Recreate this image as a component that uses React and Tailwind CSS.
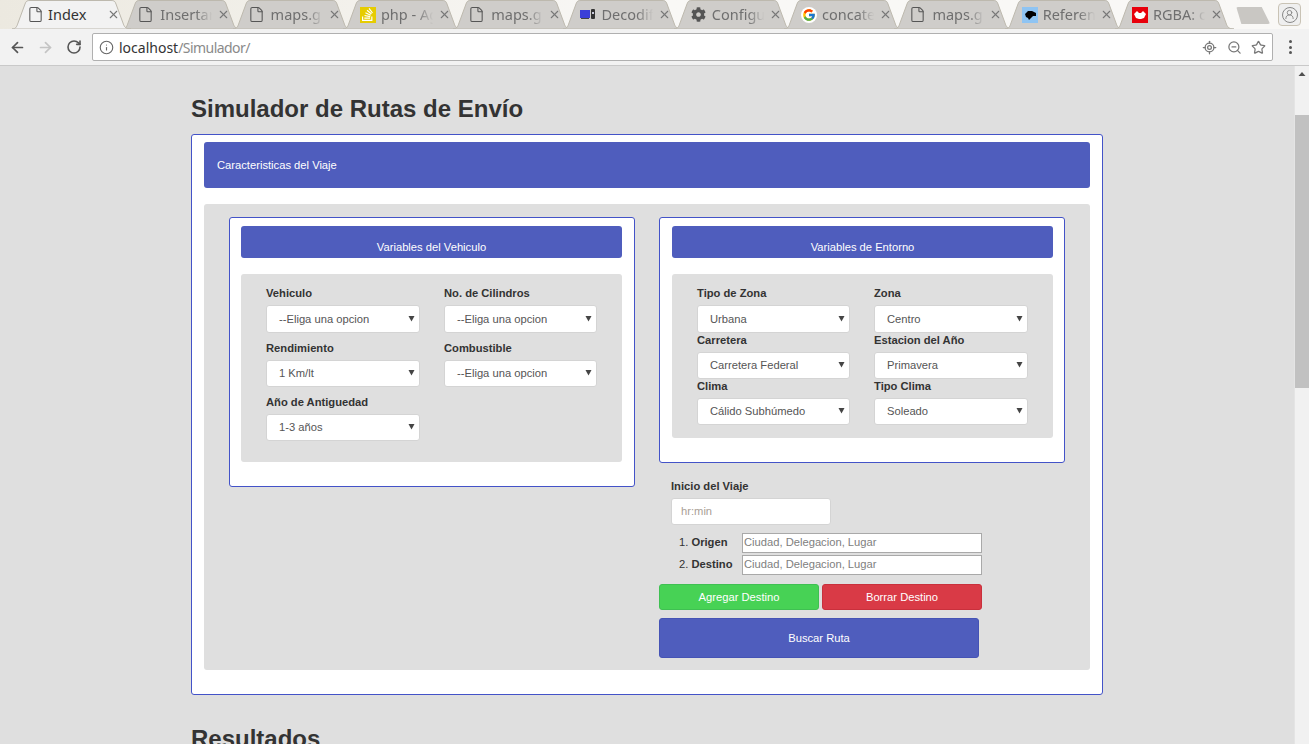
import { ArrowLeft, ArrowRight, RotateCw, Info, ZoomOut, Star, X, File, LocateFixed, UserRound } from "lucide-react";
import { FaCog } from "react-icons/fa";
import { FcGoogle } from "react-icons/fc";
import { SiStackoverflow } from "react-icons/si";

const sans = "font-['Liberation_Sans',Arial,sans-serif]";

const FileIcon = () => <File size={17} strokeWidth={1.5} className="ml-[-2px] text-[#555]" />;

const tabs = [
  { title: "Index", active: true, icon: <FileIcon /> },
  { title: "Insertar", icon: <FileIcon /> },
  { title: "maps.g", icon: <FileIcon /> },
  {
    title: "php - Ag",
    icon: (
      <span className="flex h-4 w-4 items-center justify-center bg-[#e6cc00] text-white">
        <SiStackoverflow size={13} />
      </span>
    ),
  },
  { title: "maps.g", icon: <FileIcon /> },
  {
    title: "Decodif",
    icon: (
      <svg width="16" height="16" viewBox="0 0 16 16">
        <rect x="0" y="3" width="10" height="8" fill="#3b3fd8" />
        <rect x="1" y="11" width="8" height="1" fill="#444" />
        <rect x="11" y="2" width="4" height="10" rx="1" fill="#333" />
        <rect x="12" y="5" width="2" height="2" fill="#ccd" />
      </svg>
    ),
  },
  { title: "Configu", icon: <FaCog size={15} className="text-[#555]" /> },
  {
    title: "concate",
    icon: (
      <span className="flex h-4 w-4 items-center justify-center rounded-full bg-white">
        <FcGoogle size={14} />
      </span>
    ),
  },
  { title: "maps.g", icon: <FileIcon /> },
  {
    title: "Referen",
    icon: (
      <svg width="16" height="16" viewBox="0 0 16 16">
        <rect width="16" height="16" fill="#8fc4f2" />
        <path d="M3 7 L6 4 L10 4 L14 6 L14 9 L11 9 L9 11 L7 13 L6 11 L4 10 Z" fill="#000" />
      </svg>
    ),
  },
  {
    title: "RGBA: c",
    icon: (
      <svg width="16" height="16" viewBox="0 0 16 16">
        <rect width="16" height="16" fill="#e8000b" />
        <path d="M2 7 L5 4 L7 6 L9 6 L11 4 L14 7 L12 11 L9 12 L7 12 L4 11 Z" fill="#fff" />
      </svg>
    ),
  },
];

const Tab = ({ title, icon, active }) => (
  <div className={`relative h-[29px] w-[110.3px] shrink-0 ${active ? "z-10" : ""}`}>
    <svg width="127" height="29" viewBox="0 0 127 29" className="absolute top-0 left-[-12px]">
      <path
        d="M0 29 C4 29 5 26 6 23 L13 4 C14 1 15 0.5 18 0.5 L99 0.5 C102 0.5 103 1 104 4 L111 23 C112 26 113 29 119 29 Z"
        fill={active ? "#f2f2f2" : "#cfcdca"}
        stroke="#bdb9ae"
        strokeWidth="1"
      />
    </svg>
    <div className="relative flex h-[29px] items-center pl-[5px] font-['Noto_Sans',sans-serif] text-[14.5px]">
      <span className={`flex shrink-0 items-center ${active ? "w-[19px]" : "w-[21px]"}`}>{icon}</span>
      <span
        className={`overflow-hidden whitespace-nowrap ${active ? "w-[57px] text-[#333]" : "w-[55px] text-[#6f6f6f] [mask-image:linear-gradient(to_right,black_65%,transparent_95%)]"}`}
      >
        {title}
      </span>
      <X size={13} strokeWidth={2} className="ml-[2px] text-[#777]" />
    </div>
  </div>
);

const BrowserBar = () => (
  <div className="shrink-0">
    <div className="flex h-[29px] bg-gradient-to-r from-[#ece9e0] via-[#f9f8f6] to-[#f9f8f6] pl-[24px]">
      {tabs.map((tab, i) => (
        <Tab key={i} {...tab} />
      ))}
      <div className="mt-[7px] ml-[-1px] h-[17px] w-[34px] shrink-0 rounded-[2px] bg-[#c9c7c3] [clip-path:polygon(0_0,75%_0,100%_100%,15%_100%)]" />
      <div className="mt-[3px] ml-[8px] flex h-[23px] w-[23px] shrink-0 items-center justify-center rounded-[4px] border border-[#c9c3b5] bg-[#efefef]">
        <span className="flex h-[16px] w-[16px] items-center justify-center rounded-full border border-[#888]">
          <UserRound size={11} className="text-[#888]" />
        </span>
      </div>
    </div>
    <div className="flex h-[37px] items-center border-b border-[#c9c9c9] bg-[#f2f2f2]">
      <ArrowLeft size={17} strokeWidth={2.4} className="ml-[9px] text-[#555]" />
      <ArrowRight size={17} strokeWidth={2.4} className="ml-[11px] text-[#c4c4c4]" />
      <RotateCw size={16} strokeWidth={2.4} className="ml-[12px] text-[#555]" />
      <div className="ml-[10px] flex h-[28px] w-[1181px] items-center rounded-[2px] border border-[#b0b0b0] bg-white pr-[6px] pl-[6px] font-['Noto_Sans',sans-serif] text-[14px]">
        <Info size={15} strokeWidth={1.8} className="text-[#666]" />
        <span className="ml-[5px] text-[#333]">localhost</span>
        <span className="tracking-[-0.55px] text-[#8a8a8a]">/Simulador/</span>
        <LocateFixed size={15} strokeWidth={2} className="mr-[10px] ml-auto text-[#777]" />
        <ZoomOut size={15} strokeWidth={2} className="mr-[9px] text-[#777]" />
        <Star size={15} strokeWidth={2} className="text-[#777]" />
      </div>
      <div className="ml-[16px] flex flex-col gap-[2.5px]">
        <span className="h-[3px] w-[3px] rounded-full bg-[#555]" />
        <span className="h-[3px] w-[3px] rounded-full bg-[#555]" />
        <span className="h-[3px] w-[3px] rounded-full bg-[#555]" />
      </div>
    </div>
  </div>
);

const Select = ({ value, w = "w-[154px]", h = "h-[27px]" }) => (
  <div
    className={`${w} ${h} flex items-center justify-between rounded-[3px] border border-[#d4d4d4] bg-white pr-[4px] pl-[12px] text-[11.2px] text-[#555]`}
  >
    <span>{value}</span>
    <svg width="7" height="7" viewBox="0 0 7 7" className="mb-[2px]">
      <path d="M0.5 1 H6.5 L3.5 6.5 Z" fill="#444" />
    </svg>
  </div>
);

const Field = ({ label, value, gap = "mb-[5px]", w, h }) => (
  <div>
    <div className={`${gap} h-[13px] text-[11.2px] leading-[13px] font-bold text-[#333]`}>{label}</div>
    <Select value={value} w={w} h={h} />
  </div>
);

const SectionHeader = ({ children }) => (
  <div className="flex h-[32px] items-end justify-center rounded-[3px] bg-[#4f5dbd] pb-[2px] text-[11.2px] text-white">
    {children}
  </div>
);

const VehicleCard = () => (
  <div className="h-[270px] w-[406px] rounded-[3px] border border-[#4353c8] bg-white pt-[8px] pr-[12px] pl-[11px]">
    <SectionHeader>Variables del Vehiculo</SectionHeader>
    <div className="mt-[16px] h-[188px] rounded-[3px] bg-[#dfdfdf] pt-[13px] pl-[25px]">
      <div className="grid grid-cols-[178px_154px] gap-y-[9px]">
        <Field label="Vehiculo" value="--Eliga una opcion" h="h-[28px]" />
        <Field label="No. de Cilindros" value="--Eliga una opcion" w="w-[153px]" h="h-[28px]" />
        <Field label="Rendimiento" value="1 Km/lt" />
        <Field label="Combustible" value="--Eliga una opcion" w="w-[153px]" />
        <Field label="Año de Antiguedad" value="1-3 años" />
      </div>
    </div>
  </div>
);

const EnvironmentCard = () => (
  <div className="h-[246px] w-[406px] rounded-[3px] border border-[#4353c8] bg-white pt-[8px] pr-[11px] pl-[12px]">
    <SectionHeader>Variables de Entorno</SectionHeader>
    <div className="mt-[16px] h-[164px] rounded-[3px] bg-[#dfdfdf] pt-[13px] pl-[25px]">
      <div className="grid grid-cols-[177px_154px] gap-y-[1px]">
        <Field label="Tipo de Zona" value="Urbana" w="w-[153px]" h="h-[28px]" />
        <Field label="Zona" value="Centro" h="h-[28px]" />
        <Field label="Carretera" value="Carretera Federal" w="w-[153px]" />
        <Field label="Estacion del Año" value="Primavera" />
        <Field label="Clima" value="Cálido Subhúmedo" w="w-[153px]" />
        <Field label="Tipo Clima" value="Soleado" />
      </div>
    </div>
  </div>
);

const PlaceRow = ({ num, label }) => (
  <div className="flex h-[20px] items-center pl-[20px] text-[11.2px] text-[#333]">
    <span className="mb-[2px] w-[63px] whitespace-nowrap">
      {num}. <b>{label}</b>
    </span>
    <input
      readOnly
      placeholder="Ciudad, Delegacion, Lugar"
      className="h-[20px] w-[240px] border border-[#a9a9a9] bg-white px-[1px] pb-[2px] text-[11.2px] placeholder:text-[#808080]"
    />
  </div>
);

const RouteForm = () => (
  <div className="mt-[17px]">
    <div className="ml-[12px] h-[13px] text-[11.2px] leading-[13px] font-bold text-[#333]">Inicio del Viaje</div>
    <input
      readOnly
      placeholder="hr:min"
      className="mt-[5px] ml-[12px] block h-[27px] w-[160px] rounded-[3px] border border-[#d4d4d4] bg-white pb-[2px] pl-[9px] text-[11.2px] placeholder:text-[#a9a096]"
    />
    <div className="mt-[8px] flex flex-col gap-[2px]">
      <PlaceRow num="1" label="Origen" />
      <PlaceRow num="2" label="Destino" />
    </div>
    <div className="mt-[9px] flex gap-[3px] text-[11.2px] text-white">
      <button className="h-[26px] w-[160px] rounded-[3px] border border-[#3fc052] bg-[#47d255]">Agregar Destino</button>
      <button className="h-[26px] w-[160px] rounded-[3px] border border-[#c9303c] bg-[#d93a46]">Borrar Destino</button>
    </div>
    <button className="mt-[8px] h-[40px] w-[320px] rounded-[3px] border border-[#4553b5] bg-[#4f5dbd] text-[11.2px] text-white">
      Buscar Ruta
    </button>
  </div>
);

const Scrollbar = () => (
  <div className="w-[15px] shrink-0 border-l border-[#e4e4e4] bg-[#f1f1f1]">
    <svg width="14" height="14" viewBox="0 0 14 14" className="mt-[1px]">
      <path d="M3.5 9 L7 5 L10.5 9 Z" fill="#505050" />
    </svg>
    <div className="mt-[34px] h-[273px] w-[14px] bg-[#c1c1c1]" />
  </div>
);

export default function App() {
  return (
    <div className={`flex h-screen w-screen flex-col overflow-hidden bg-[#dfdfdf] ${sans}`}>
      <BrowserBar />
      <div className="flex min-h-0 flex-1">
        <main className="min-w-0 flex-1 overflow-hidden pl-[191px]">
          <h1 className="mt-[30px] h-[26px] text-[24px] leading-[26px] font-bold text-[#333]">Simulador de Rutas de Envío</h1>
          <section className="mt-[12px] h-[561px] w-[912px] rounded-[3px] border border-[#4353c8] bg-white px-[12px] pt-[7px]">
            <div className="flex h-[46px] items-center rounded-[3px] bg-[#4f5dbd] pl-[13px] text-[11.2px] text-white">
              Caracteristicas del Viaje
            </div>
            <div className="mt-[16px] flex h-[466px] gap-[24px] rounded-[3px] bg-[#dfdfdf] pt-[13px] pl-[25px]">
              <VehicleCard />
              <div>
                <EnvironmentCard />
                <RouteForm />
              </div>
            </div>
          </section>
          <h2 className="mt-[31px] text-[24px] leading-[26px] font-bold text-[#333]">Resultados</h2>
        </main>
        <Scrollbar />
      </div>
    </div>
  );
}
